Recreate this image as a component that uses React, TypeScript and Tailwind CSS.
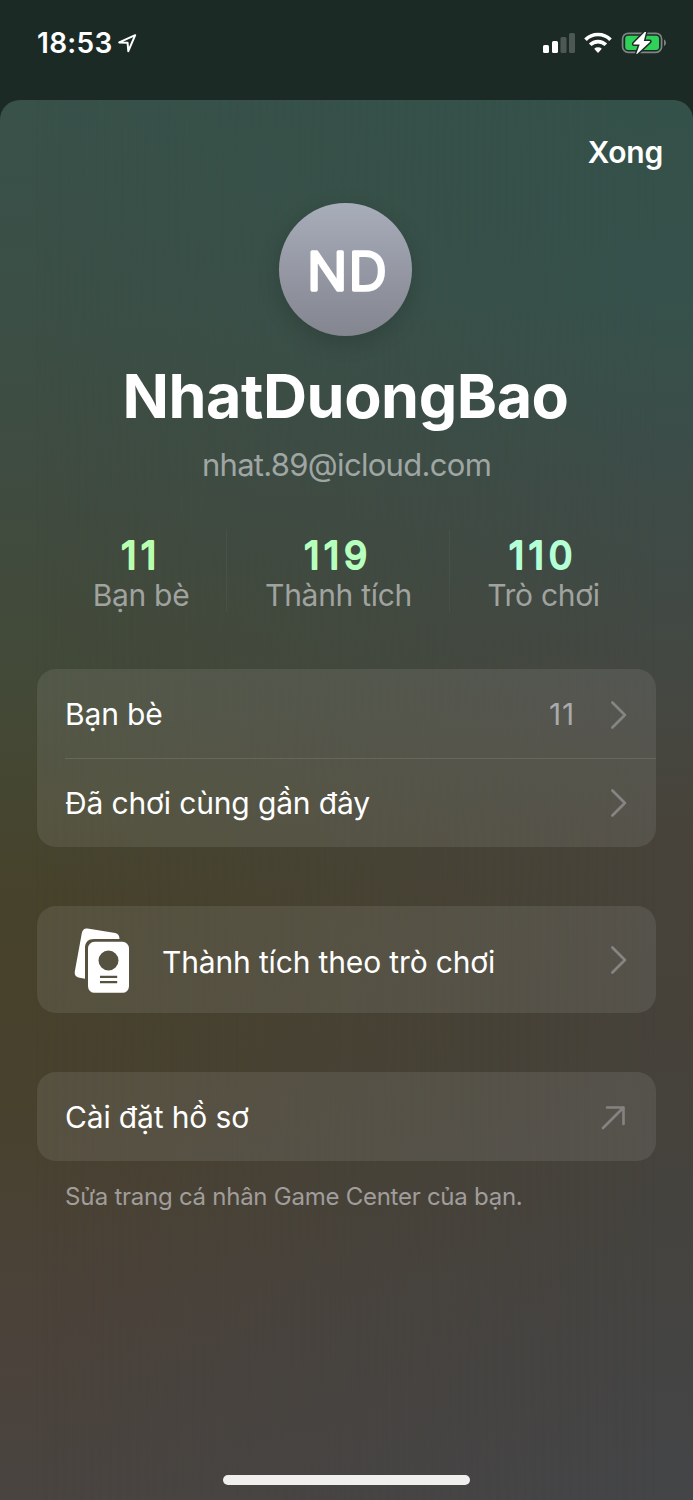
import type { ReactNode } from "react";

const STATS = [
  { label: "Bạn bè", value: "11", width: "w-[172px]", color: "#b9ffb0" },
  { label: "Thành tích", value: "119", width: "w-[223px]", color: "#b6ffbd" },
  { label: "Trò chơi", value: "110", width: "w-[186px]", color: "#b4ffd6" },
];

function StatusBar() {
  return (
    <header className="flex h-[100px] items-start justify-between pt-[32px] pr-[26px] pl-[37px]">
      <div className="flex items-center">
        <span className="w-[75px] text-[28px] leading-[22px] font-semibold tracking-[0.3px] whitespace-nowrap">18:53</span>
        <svg viewBox="0 0 20 20" className="ml-[5px] size-5" fill="none" stroke="currentColor" strokeWidth="2" strokeLinejoin="round">
          <path d="M18.2 2.2 2.2 9.4l8.4.4.7 8.4L18.2 2.2Z" />
        </svg>
      </div>
      <svg viewBox="0 0 124 22" className="h-[22px] w-[124px]">
        <g fill="#fff">
          <rect x="0" y="13" width="6" height="8" rx="1.6" />
          <rect x="9" y="9" width="6" height="12" rx="1.6" />
          <rect x="17.5" y="5" width="6" height="16" rx="1.6" opacity="0.22" />
          <rect x="26" y="1" width="6" height="20" rx="1.6" opacity="0.22" />
        </g>
        <g fill="none" stroke="#fff" strokeWidth="3.7">
          <path d="M42.5 7.7a17.6 17.6 0 0 1 25 0" />
          <path d="M47.2 12.8a11 11 0 0 1 15.6 0" />
        </g>
        <path d="M51.2 16.7a5.6 5.6 0 0 1 7.6 0L55 20.9Z" fill="#fff" />
        <rect x="79.6" y="1.3" width="39" height="19" rx="5.6" fill="none" stroke="#7c8582" strokeWidth="1.7" />
        <path d="M121 7.4c2.6 1.2 2.6 5.3 0 6.6Z" fill="#7c8582" />
        <rect x="82.2" y="3.7" width="33.8" height="14.2" rx="3" fill="#30d158" />
        <path
          d="M101.9-.2 90.7 11.3c-.6.6-.3 1.2.4 1.2h5.6l-3.3 8.9c-.2.8.3 1 .9.4L106.9 10c.5-.6.3-1.1-.4-1.1h-5.7l2.2-8.5c.3-.8-.5-1.2-1.1-.6Z"
          fill="#fff"
          stroke="#1c2a26"
          strokeWidth="3"
          paintOrder="stroke"
        />
      </svg>
    </header>
  );
}

function ChevronIcon() {
  return (
    <svg viewBox="0 0 16 28" className="h-7 w-4" fill="none" stroke="#868583" strokeWidth="2.6" strokeLinecap="round" strokeLinejoin="round">
      <path d="M1.4 1.5 13.9 14 1.4 26.5" />
    </svg>
  );
}

function CardsIcon() {
  return (
    <svg viewBox="0 0 56 66" className="h-[66px] w-14" fill="#fff">
      <path d="M13.5.6 41.2 5c3 .5 4.3 2.6 4.3 5.9H20.2c-6 0-9.2 3.2-9.2 9.2v30.6l-6.6-1.3C1.3 48.8.3 46.6.8 43.6L7.8 5.2C8.4 1.8 10.5.1 13.5.6Z" />
      <path
        fillRule="evenodd"
        d="M20.5 13.8h28a6.500 6.500 0 0 1 6.500 6.500v38a6.500 6.500 0 0 1-6.500 6.500h-28a6.500 6.500 0 0 1-6.500-6.500v-38a6.500 6.500 0 0 1 6.500-6.500ZM34.500 22.500a10 10 0 1 0 0 20 10 10 0 0 0 0-20ZM26 47.800v2.200h17.200v-2.200ZM26 53v2.200h17.200V53Z"
      />
    </svg>
  );
}

function Card({ children }: { children: ReactNode }) {
  return (
    <section className="mx-[37px] w-[619px] rounded-[19px] bg-white/[0.085] text-[30px] tracking-[-0.15px]">{children}</section>
  );
}

export default function App() {
  return (
    <div className="h-[1500px] w-[693px] overflow-hidden bg-[#1c2a26] font-['Inter','Liberation_Sans',sans-serif] text-white">
      <StatusBar />

      <main className="relative isolate flex h-[1400px] flex-col rounded-t-[20px] bg-linear-[180deg,#385149_0%,#3b4f46_14%,#404b3f_29%,#434936_43%,#47422b_57%,#48412e_72%,#4b4239_86%,#494440_100%]">
        {/* cooler tone that fades in towards the right edge */}
        <div className="absolute inset-0 -z-10 rounded-t-[20px] bg-linear-[180deg,#345149_0%,#36514b_14%,#3e4b47_29%,#454741_43%,#47433a_52%,#46423a_66%,#45433e_79%,#444443_90%,#444547_100%] mask-linear-[90deg,transparent_5%,black_95%]" />

        <div className="flex h-[103px] justify-end pt-[33px] pr-[30px]">
          <button className="h-[38px] text-[30px] leading-[38px] font-semibold tracking-[-0.2px]">Xong</button>
        </div>

        <div className="ml-[279px] size-[133px] rounded-full bg-linear-to-b from-[#a8adba] to-[#83858f] shadow-[0_6px_22px_rgba(0,0,0,0.16)]">
          {/* the round stroke softens the corners of the initials */}
          <svg viewBox="0 0 133 133" className="size-full" fill="#fff" stroke="#fff" strokeWidth="3.6" strokeLinejoin="round">
            <text x="68.7" y="87" textAnchor="middle" fontSize="52.5" fontWeight="300" letterSpacing="1.6">
              ND
            </text>
          </svg>
        </div>

        <h1 className="mt-[22px] pr-[2px] text-center text-[61px] leading-[76px] font-bold tracking-[-0.45px]">NhatDuongBao</h1>
        <p className="mt-[11px] text-center text-[31px] leading-[40px] tracking-[-0.7px] text-[#9fa6a4]">nhat.89@icloud.com</p>

        <div className="mt-[45px] ml-[55px] flex h-[82px] divide-x divide-white/[0.04]">
          {STATS.map((stat) => (
            <div key={stat.label} className={`flex flex-col items-center ${stat.width}`}>
              <svg
                viewBox="0 0 100 56"
                className="-mb-[10px] h-[56px] w-[100px] shrink-0 overflow-visible"
                fill={stat.color}
                stroke={stat.color}
                strokeWidth="2.1"
                strokeLinejoin="round"
              >
                <text x="50" y="38.5" textAnchor="middle" fontSize="37.5" fontWeight="400" letterSpacing="4.6">
                  {stat.value}
                </text>
              </svg>
              <span className="pl-[1px] text-[30px] leading-[38px] tracking-[-0.3px] text-[#a0a3a0]">{stat.label}</span>
            </div>
          ))}
        </div>

        <div className="mt-[57px]">
          <Card>
            <div className="flex h-[89px] items-center pt-[2px] pr-[29px] pl-[28px]">
              <span>Bạn bè</span>
              <span className="mr-[36px] ml-auto tracking-[0.8px] text-[#aaaaad]">11</span>
              <ChevronIcon />
            </div>
            <div className="ml-[28px] flex h-[89px] items-center justify-between border-t border-white/[0.11] pr-[29px]">
              <span>Đã chơi cùng gần đây</span>
              <ChevronIcon />
            </div>
          </Card>
        </div>

        <div className="mt-[59px]">
          <Card>
            <div className="flex h-[107px] items-center pt-[2px] pr-[29px] pl-[37px]">
              <CardsIcon />
              <span className="ml-[32px] pt-1">Thành tích theo trò chơi</span>
              <span className="ml-auto pb-px">
                <ChevronIcon />
              </span>
            </div>
          </Card>
        </div>

        <div className="mt-[59px]">
          <Card>
            <div className="flex h-[89px] items-center justify-between pt-[2px] pr-[31px] pl-[28px]">
              <span>Cài đặt hồ sơ</span>
              <svg viewBox="0 0 24 24" className="size-6" fill="none" stroke="#858381" strokeWidth="2.6" strokeLinecap="round" strokeLinejoin="round">
                <path d="M2 22 22.5 1.5M6 1.5h16.500V18" />
              </svg>
            </div>
          </Card>
          <p className="mt-[20px] ml-[65px] text-[24px] leading-[32px] tracking-[-0.26px] text-[#a09d9b]">
            Sửa trang cá nhân Game Center của bạn.
          </p>
        </div>

        <div className="mx-auto mt-auto mb-[15px] h-[10px] w-[247px] rounded-full bg-[#f0efee]" />
      </main>
    </div>
  );
}
